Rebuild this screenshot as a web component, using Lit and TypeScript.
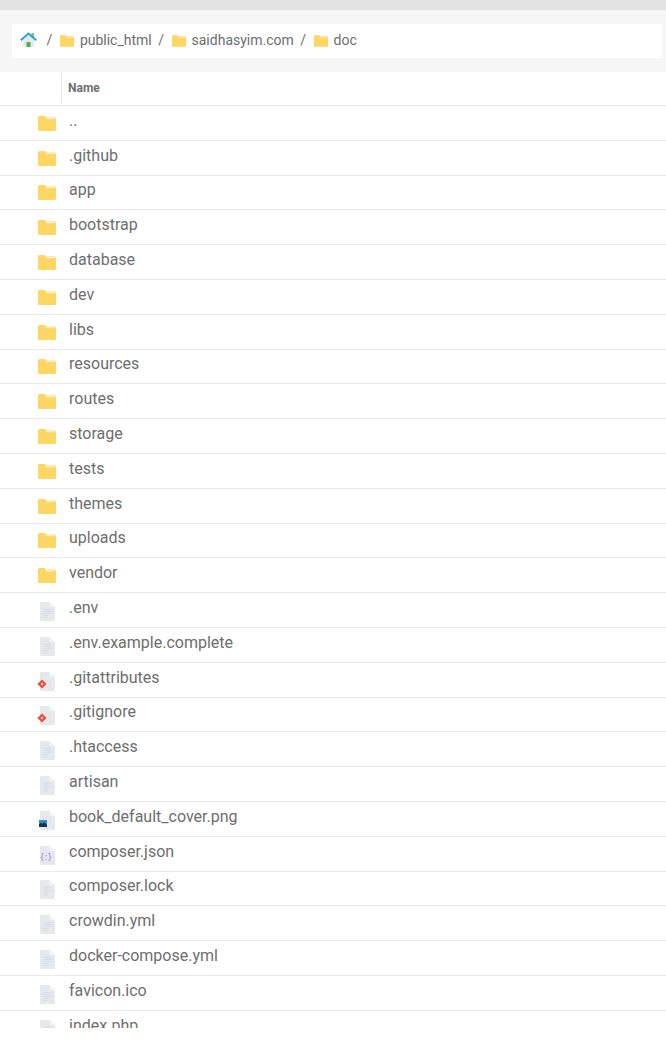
import { LitElement, html, css, svg } from "lit";
import { customElement } from "lit/decorators.js";

type Kind = "folder" | "file" | "git" | "image" | "json";

const rows: [string, Kind][] = [
  ["..", "folder"], [".github", "folder"], ["app", "folder"], ["bootstrap", "folder"],
  ["database", "folder"], ["dev", "folder"], ["libs", "folder"], ["resources", "folder"],
  ["routes", "folder"], ["storage", "folder"], ["tests", "folder"], ["themes", "folder"],
  ["uploads", "folder"], ["vendor", "folder"], [".env", "file"], [".env.example.complete", "file"],
  [".gitattributes", "git"], [".gitignore", "git"], [".htaccess", "file"], ["artisan", "file"],
  ["book_default_cover.png", "image"], ["composer.json", "json"], ["composer.lock", "file"],
  ["crowdin.yml", "file"], ["docker-compose.yml", "file"], ["favicon.ico", "file"], ["index.php", "file"],
];

const folder = (w: number, h: number) => html`<svg width=${w} height=${h} viewBox="0 0 18 15">
  <path d="M1.5 0H6.6L8.2 1.5H16.5Q18 1.5 18 3V13.5Q18 15 16.5 15H1.5Q0 15 0 13.5V1.5Q0 0 1.5 0Z" fill="#fdd663"/>
  <rect x="8" y="2" width="8.6" height="1.2" fill="#fff0c4"/>
</svg>`;

const fileBase = svg`<path d="M0 1Q0 0 1 0H9.5L15 5V18Q15 19 14 19H1Q0 19 0 18Z" fill="#e6e9ec"/>
  <path d="M9.5 0L15 5H10.5Q9.5 5 9.5 4Z" fill="#f4f5f6"/>`;

const lines = svg`<path d="M3.5 7.5H11.5M3.5 9.5H11.5M3.5 11.5H11.5M3.5 13.5H8.5M3.5 15.5H7" stroke="#d8dcdf" stroke-width="1" fill="none"/>`;

function icon(k: Kind) {
  if (k === "folder") return html`<span class="ico folder-ico">${folder(18, 15)}</span>`;
  let extra = lines;
  if (k === "git") extra = svg`<path d="M2 7.6L6.6 12L2 16.4L-2.6 12Z" fill="#ee4b3c"/><circle cx="2" cy="12" r="1.2" fill="#fbc9c4"/>`;
  if (k === "image") extra = svg`<rect x="-1" y="9" width="8" height="7" fill="#2d8fd0"/><path d="M-1 16V13.5L1 11.5L2.5 13L4 11L7 14V16Z" fill="#1d2f40"/>`;
  if (k === "json") extra = svg`<text x="6" y="13.5" text-anchor="middle" font-family="'DejaVu Sans', sans-serif" font-size="8" fill="#a678cc">{:}</text>`;
  return html`<span class="ico"><svg width="15" height="19" viewBox="0 0 15 19" overflow="visible">${fileBase}${extra}</svg></span>`;
}

@customElement("app-root")
export class AppRoot extends LitElement {
  static styles = css`
    :host {
      display: block;
      height: 1044px;
      background: #fff;
      overflow: hidden;
      font-family: Roboto, "Liberation Sans", sans-serif;
      color: #6e6e6e;
    }
    .topbar { height: 10px; background: #e3e3e3; }
    .crumbwrap { height: 62px; box-sizing: border-box; background: #f6f6f6; padding: 14px 4px 14px 12px; }
    .crumbs {
      height: 34px; background: #fff; display: flex; align-items: center;
      padding-left: 8px; font-size: 14px; color: #6e6e6e;
    }
    .crumbs > span { position: relative; top: -1px; }
    .home { display: flex; margin-right: 9.6px; }
    .sep { margin-right: 8px; }
    .crumb { display: flex; align-items: center; gap: 5.5px; margin-right: 6.5px; }
    .crumb svg { display: block; position: relative; top: 1px; }
    .list { height: 956px; overflow: hidden; }
    .head {
      height: 34px; box-sizing: border-box; display: flex;
      border-bottom: 1px solid #e9e9e9;
    }
    .head-blank { width: 61px; border-right: 1px solid #e9e9e9; height: 33px; }
    .head-name { padding-left: 6px; font-size: 12px; font-weight: 700; color: #6e6e6e; line-height: 32px; }
    .row {
      height: 34.8px; box-sizing: border-box; display: flex; align-items: center;
      border-bottom: 1px solid #e9e9e9; font-size: 16px; color: #6e6e6e;
    }
    .ico { width: 69px; flex: none; display: flex; padding-left: 40px; box-sizing: border-box; padding-top: 3px; }
    .folder-ico { padding-left: 38px; padding-top: 1px; }
    .ico svg { display: block; }
    .name { position: relative; top: -2.5px; white-space: nowrap; }
  `;

  render() {
    return html`
      <div class="topbar"></div>
      <div class="crumbwrap">
        <div class="crumbs">
          <span class="home">
            <svg width="17" height="16" viewBox="0 0 17 16">
              <path d="M11.5 1H14V6H11.5Z" fill="#7cc576"/>
              <path d="M3 8V15H14V8L8.5 3Z" fill="#e6eaec"/>
              <rect x="6.5" y="10" width="4" height="5" fill="#4caf50"/>
              <path d="M0.8 8.2L8.5 1.6L16.2 8.2" fill="none" stroke="#2a9fd6" stroke-width="2"/>
            </svg>
          </span>
          <span class="sep">/</span>
          <span class="crumb">${folder(14, 12)}<span>public_html</span></span>
          <span class="sep">/</span>
          <span class="crumb">${folder(14, 12)}<span>saidhasyim.com</span></span>
          <span class="sep">/</span>
          <span class="crumb">${folder(14, 12)}<span>doc</span></span>
        </div>
      </div>
      <div class="list">
        <div class="head"><div class="head-blank"></div><div class="head-name">Name</div></div>
        ${rows.map(([n, k]) => html`<div class="row">${icon(k)}<span class="name">${n}</span></div>`)}
      </div>
    `;
  }
}
